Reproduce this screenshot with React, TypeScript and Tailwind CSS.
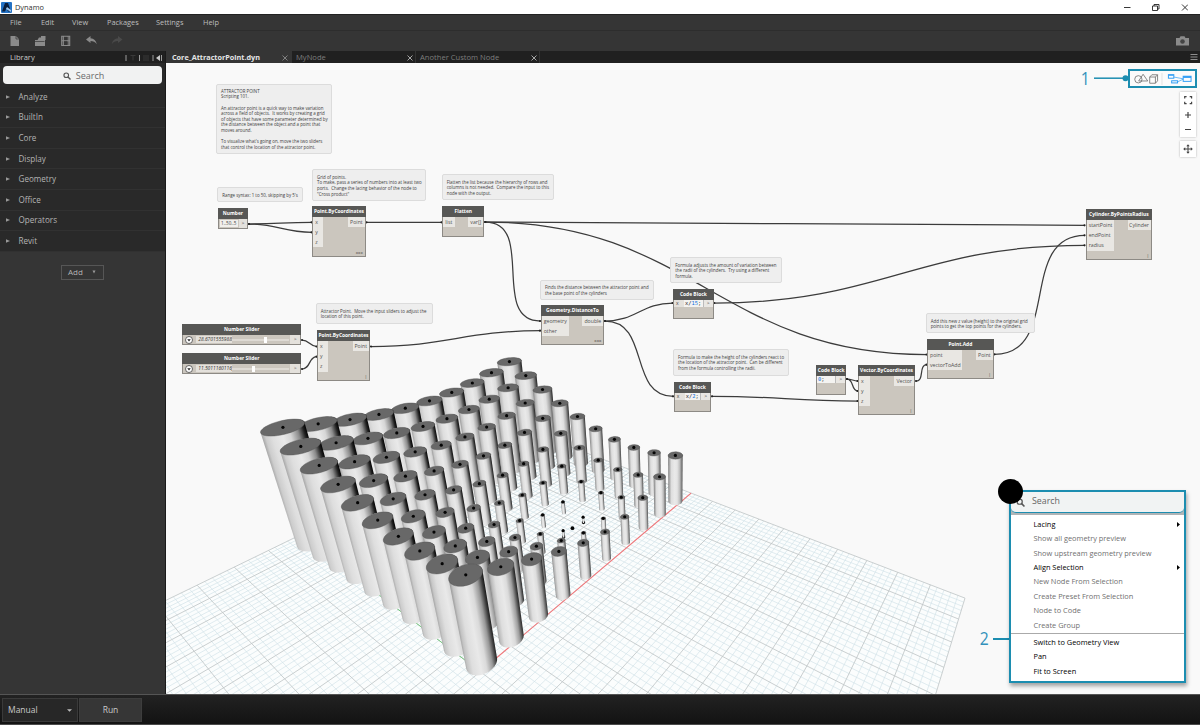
import React from "react";

/* ---------- camera for the background geometry preview ---------- */

const CAM = [1.128267, -0.149705, -0.353239, 0.960449, 0.147092, 0.102962, -0.904811, 1.34325, 0.511136, 0.351331, -0.261642];

type Pt = [number, number];

function depth(X: number, Y: number, Z: number) {
  return (CAM[8] * X + CAM[9] * Y + CAM[10] * Z) / 50 + 1;
}

function project(X: number, Y: number, Z: number): Pt {
  const w = depth(X, Y, Z);
  return [
    (500 * ((CAM[0] * X + CAM[1] * Y + CAM[2] * Z) / 50 + CAM[3])) / w,
    (500 * ((CAM[4] * X + CAM[5] * Y + CAM[6] * Z) / 50 + CAM[7])) / w,
  ];
}

function hull(points: Pt[]): Pt[] {
  const p = [...points].sort((a, b) => a[0] - b[0] || a[1] - b[1]);
  const cross = (o: Pt, a: Pt, b: Pt) => (a[0] - o[0]) * (b[1] - o[1]) - (a[1] - o[1]) * (b[0] - o[0]);
  const half = (list: Pt[]) => {
    const out: Pt[] = [];
    for (const q of list) {
      while (out.length > 1 && cross(out[out.length - 2], out[out.length - 1], q) <= 0) out.pop();
      out.push(q);
    }
    out.pop();
    return out;
  };
  return [...half(p), ...half([...p].reverse())];
}

const fmt = (p: Pt[]) => p.map((q) => q[0].toFixed(2) + "," + q[1].toFixed(2)).join(" ");

function circle(x: number, y: number, z: number, r: number): Pt[] {
  return Array.from({ length: 40 }, (_, k) => {
    const a = (k / 40) * Math.PI * 2;
    return project(x + r * Math.cos(a), y + r * Math.sin(a), z);
  });
}

const ATTRACTOR: Pt = [28.67, 11.5];

const cylinders = Array.from({ length: 100 }, (_, k) => {
  const x = 1 + 5 * (k % 10);
  const y = 1 + 5 * Math.floor(k / 10);
  const d = Math.hypot(x - ATTRACTOR[0], y - ATTRACTOR[1]);
  const topRing = circle(x, y, d / 2, d / 15);
  const baseRing = circle(x, y, 0, d / 15);
  const c0 = project(x, y, 0);
  const c1 = project(x, y, d / 2);
  const len = Math.hypot(c0[0] - c1[0], c0[1] - c1[1]) || 1;
  const nx = (c0[1] - c1[1]) / len;
  const ny = -(c0[0] - c1[0]) / len;
  const off = [...topRing, ...baseRing].map((q) => (q[0] - c1[0]) * nx + (q[1] - c1[1]) * ny);
  const lo = Math.min(...off);
  const hi = Math.max(...off);
  return {
    id: "cyl" + k,
    order: depth(x, y, 0),
    body: fmt(hull([...topRing, ...baseRing])),
    cap: fmt(topRing),
    c0,
    c1,
    small: d < 5,
    grad: [c1[0] + nx * lo, c1[1] + ny * lo, c1[0] + nx * hi, c1[1] + ny * hi],
    side: Math.max(0, Math.min(1, (c1[0] - 400) / 260)),
  };
}).sort((a, b) => b.order - a.order);

const gridLines = Array.from({ length: 101 }, (_, k) => k - 50)
  .flatMap((n) => [
    { n, a: project(n, -50, 0), b: project(n, 50, 0) },
    { n, a: project(-50, n, 0), b: project(50, n, 0) },
  ])
  .sort((p, q) => (p.n % 5 ? 0 : 1) - (q.n % 5 ? 0 : 1));

const mix = (a: number, b: number, t: number) => {
  const v = Math.round(a + (b - a) * t);
  return `rgb(${v},${v},${v})`;
};

function Scene() {
  const o = project(0, 0, 0);
  const ax = project(50, 0, 0);
  const ay = project(0, 50, 0);
  const at = project(ATTRACTOR[0], ATTRACTOR[1], 0);
  return (
    <svg className="absolute top-0 left-0 h-[631px] w-[1034px]" viewBox="166 63 1034 631">
      <defs>
        {cylinders.map((c) => (
          <linearGradient key={c.id} id={c.id} gradientUnits="userSpaceOnUse" x1={c.grad[0]} y1={c.grad[1]} x2={c.grad[2]} y2={c.grad[3]}>
            <stop offset="0" stopColor={mix(165, 115, c.side)} />
            <stop offset="0.08" stopColor={mix(205, 165, c.side)} />
            <stop offset="0.22" stopColor="#dedede" />
            <stop offset="0.45" stopColor="#e9e9e9" />
            <stop offset="0.62" stopColor={mix(214, 228, c.side)} />
            <stop offset="0.8" stopColor={mix(140, 190, c.side)} />
            <stop offset="0.93" stopColor={mix(35, 125, c.side)} />
            <stop offset="1" stopColor={mix(0, 70, c.side)} />
          </linearGradient>
        ))}
      </defs>
      <polygon points={fmt([project(-50, -50, 0), project(50, -50, 0), project(50, 50, 0), project(-50, 50, 0)])} fill="#fbfdfd" />
      {gridLines.map((g, i) => (
        <line key={i} x1={g.a[0]} y1={g.a[1]} x2={g.b[0]} y2={g.b[1]} stroke={g.n % 5 ? "#d0e2e8" : "#c0c6c8"} strokeWidth={g.n % 5 ? 0.65 : 0.85} />
      ))}
      <line x1={o[0]} y1={o[1]} x2={ay[0]} y2={ay[1]} stroke="#6cc774" strokeWidth="0.9" />
      <line x1={o[0]} y1={o[1]} x2={ax[0]} y2={ax[1]} stroke="#f4777b" strokeWidth="1.1" />
      {cylinders.map((c) => (
        <g key={c.id}>
          {c.small && <circle cx={c.c0[0]} cy={c.c0[1]} r="1.6" fill="#111" />}
          <polygon points={c.body} fill={`url(#${c.id})`} />
          <polygon points={c.cap} fill="#686868" stroke="#505050" strokeWidth="0.4" />
          <circle cx={c.c1[0]} cy={c.c1[1]} r="1.6" fill="#050505" />
        </g>
      ))}
      <circle cx={at[0]} cy={at[1]} r="1.9" fill="#050505" />
    </svg>
  );
}

/* ---------- wires ---------- */

const wires: number[][] = [
  [249, 224, 312, 222.3],
  [249, 224, 312, 232.3],
  [366.5, 222.3, 442, 222.3],
  [485.3, 222, 1085, 225.3],
  [485.3, 222, 927, 354.5],
  [485.3, 222, 540.5, 321],
  [605, 321, 673, 303],
  [605, 321, 673.5, 396.3],
  [371, 346.5, 540.5, 330.7],
  [302, 340, 317, 346.5],
  [302, 369, 317, 356.7],
  [714.3, 303, 1085, 245.3],
  [712, 396.3, 858, 401],
  [847, 379, 858, 381],
  [847, 379, 858, 391],
  [916, 381, 927, 364.7],
  [994.5, 354.3, 1085, 235.3],
];

function Wires() {
  return (
    <svg className="absolute top-0 left-0 h-[631px] w-[1034px]" viewBox="166 63 1034 631" fill="none" stroke="#3c3c3c" strokeWidth="1.25">
      {wires.map(([x0, y0, x1, y1], i) => {
        const c = Math.hypot(x1 - x0, y1 - y0) * 0.45;
        return (
          <g key={i}>
            <path d={`M${x0} ${y0}C${x0 + c} ${y0} ${x1 - c} ${y1} ${x1} ${y1}`} />
            <circle cx={x0} cy={y0} r="1.1" fill="#222" stroke="none" />
            <circle cx={x1 - 0.5} cy={y1} r="1.1" fill="#222" stroke="none" />
          </g>
        );
      })}
    </svg>
  );
}

/* ---------- notes ---------- */

const notes = [
  { x: 216, y: 83.7, w: 116.3, h: 70.6, p: 4.6, t: "ATTRACTOR POINT\nScripting 101.\n\nAn attractor point is a quick way to make variation\nacross a field of objects.  It works by creating a grid\nof objects that have some parameter determined by\nthe distance between the object and a point that\nmoves around.\n\nTo visualize what's going on, move the two sliders\nthat control the location of the attractor point." },
  { x: 217.3, y: 187.3, w: 86, h: 14.7, p: 5, t: "Range syntax: 1 to 50, skipping by 5's" },
  { x: 312, y: 169.3, w: 113.7, h: 31.3, p: 5, t: "Grid of points.\nTo make, pass a series of numbers into at least two\nports.  Change the lacing behavior of the node to\n\"Cross product\"" },
  { x: 441.7, y: 174.3, w: 112.3, h: 26, p: 5, t: "Flatten the list because the hierarchy of rows and\ncolumns is not needed.  Compare the input to this\nnode with the output." },
  { x: 315.7, y: 303, w: 117.3, h: 20.7, p: 5.2, t: "Attractor Point.  Move the input sliders to adjust the\nlocation of this point." },
  { x: 540, y: 280, w: 113.6, h: 20, p: 4.8, t: "Finds the distance between the attractor point and\nthe base point of the cylinders" },
  { x: 670.3, y: 257.3, w: 111.6, h: 26, p: 5, t: "Formula adjusts the amount of variation between\nthe radii of the cylinders.  Try using a different\nformula." },
  { x: 673, y: 349.3, w: 116.3, h: 26.3, p: 5, t: "Formula to make the height of the cylinders react to\nthe location of the attractor point.  Can be different\nfrom the formula controlling the radii." },
  { x: 925.7, y: 313.3, w: 109.6, h: 20, p: 4.8, t: "Add this new z value (height) to the original grid\npoints to get the top points for the cylinders." },
];

/* ---------- nodes ---------- */

type NodeData = { x: number; y: number; w: number; h: number; title: string; ins: string[]; inW: number; out: string; outW: number; foot: string };

const nodes: NodeData[] = [
  { x: 312.3, y: 206, w: 53.4, h: 50.7, title: "Point.ByCoordinates", ins: ["x", "y", "z"], inW: 10, out: "Point", outW: 16.5, foot: "xxx" },
  { x: 442.3, y: 206, w: 42, h: 30.7, title: "Flatten", ins: ["list"], inW: 11.3, out: "var[]", outW: 15.5, foot: "" },
  { x: 317, y: 330.3, w: 53, h: 50.4, title: "Point.ByCoordinates", ins: ["x", "y", "z"], inW: 10, out: "Point", outW: 16.5, foot: "|" },
  { x: 540.7, y: 305, w: 63.6, h: 40, title: "Geometry.DistanceTo", ins: ["geometry", "other"], inW: 27.3, out: "double", outW: 21, foot: "xxx" },
  { x: 858, y: 365, w: 57, h: 49.7, title: "Vector.ByCoordinates", ins: ["x", "y", "z"], inW: 10.5, out: "Vector", outW: 19.7, foot: "|" },
  { x: 927, y: 338.7, w: 66.7, h: 40, title: "Point.Add", ins: ["point", "vectorToAdd"], inW: 34, out: "Point", outW: 16.5, foot: "|" },
  { x: 1085.7, y: 209.3, w: 66.3, h: 50.4, title: "Cylinder.ByPointsRadius", ins: ["startPoint", "endPoint", "radius"], inW: 27.3, out: "Cylinder", outW: 23, foot: "|" },
];

function place(n: { x: number; y: number; w: number; h: number }): React.CSSProperties {
  return { left: n.x - 166, top: n.y - 63, width: n.w, height: n.h };
}

const frame = "absolute flex flex-col border-[0.7px] border-[#8d8a85] bg-[#cbc6be]";

function Title({ children }: { children: React.ReactNode }) {
  return <div className="-mx-px -mt-px flex h-[11px] shrink-0 items-center justify-center overflow-hidden bg-[#575755] text-[4.9px] font-bold whitespace-nowrap text-white">{children}</div>;
}

function GraphNode({ n }: { n: NodeData }) {
  return (
    <div className={frame} style={place(n)}>
      <Title>{n.title}</Title>
      <div className="flex items-start justify-between text-[5.2px] leading-[10px] text-[#505050]">
        <div className="bg-[#e9e7e3]" style={{ width: n.inW }}>
          {n.ins.map((p) => (
            <div key={p} className="h-[10.1px] pl-[2px] whitespace-nowrap">{p}</div>
          ))}
        </div>
        <div className="h-[10px] bg-[#e9e7e3] pr-[2px] text-right whitespace-nowrap" style={{ width: n.outW }}>{n.out}</div>
      </div>
      <div className="mt-auto pr-[2px] text-right text-[4px] leading-[7px] font-bold text-[#77736d]">{n.foot}</div>
    </div>
  );
}

function Slider({ y, value, knob }: { y: number; value: string; knob: number }) {
  return (
    <div className={frame} style={place({ x: 182.3, y, w: 119, h: 20.5 })}>
      <Title>Number Slider</Title>
      <div className="flex h-[9px] items-center">
        <svg className="ml-[2px] size-[8px] shrink-0" viewBox="0 0 16 16">
          <circle cx="8" cy="8" r="7" fill="#fff" stroke="#444" strokeWidth="1.6" />
          <path d="M4.5 6.5h7L8 11z" fill="#222" />
        </svg>
        <div className="ml-[3px] h-[7px] w-[36px] shrink-0 overflow-hidden bg-[#e4e1dc] px-[2px] text-[4.9px] leading-[7px] whitespace-nowrap text-[#333] italic">{value}</div>
        <div className="flex h-[2px] w-[57px] shrink-0 items-center border-[0.5px] border-[#dedad4] bg-[#d8d4cd]">
          <div className="h-[6px] w-[3px] shrink-0 bg-white" style={{ marginLeft: knob }} />
        </div>
        <div className="ml-auto h-[9px] w-[10px] bg-[#e4e1dc] text-center text-[5px] leading-[9px] text-[#555]">&gt;</div>
      </div>
    </div>
  );
}

function CodeBlock({ x, y, w, h, pre, num, post, input }: { x: number; y: number; w: number; h: number; pre: string; num: string; post: string; input: boolean }) {
  return (
    <div className={frame} style={place({ x, y, w, h })}>
      <Title>Code Block</Title>
      <div className="flex h-[7px] text-[5px] leading-[7px] text-[#444]">
        {input && <div className="w-[10px] bg-[#e4e1dc] pl-[2px]">x</div>}
        <div className="grow bg-[#f4f3f1] pl-px font-['DejaVu_Sans_Mono',monospace] text-[5.4px] text-[#222]">
          {pre}
          <span className="text-[#0a6fe0]">{num}</span>
          {post}
        </div>
        <div className="w-[10px] border-l-[0.5px] border-[#bbb] bg-[#e9e7e3] text-center">&gt;</div>
      </div>
    </div>
  );
}

/* ---------- chrome ---------- */

const menu = [
  ["File", "ml-[10px] w-[31px]"],
  ["Edit", "w-[31px]"],
  ["View", "w-[35px]"],
  ["Packages", "w-[49px]"],
  ["Settings", "w-[47px]"],
  ["Help", ""],
];

const library = ["Analyze", "BuiltIn", "Core", "Display", "Geometry", "Office", "Operators", "Revit"];

function Magnifier({ className }: { className: string }) {
  return (
    <svg className={className} viewBox="0 0 16 16" fill="none" stroke="#555" strokeWidth="2.2">
      <circle cx="6.5" cy="6.5" r="4.6" />
      <path d="M10 10l5 5" strokeWidth="2.8" />
    </svg>
  );
}

function Sidebar() {
  return (
    <aside className="flex w-[166px] shrink-0 flex-col border-r border-[#1a1a1a] bg-[#353535]">
      <div className="flex h-[12px] items-center bg-[#202020] pt-px pl-[10px] text-[7.6px] text-[#c8c8c8]">
        Library
        <svg className="mr-[2px] ml-auto h-[8px] w-[38px]" viewBox="0 0 38 8" fill="none" stroke="#aaa" strokeWidth="0.9">
          <path d="M1 1v6M14.5 1v6M28 1v6M36.5 1v6" />
          <path d="M5.500 1.500h5M8 1.500v5M18 2h6M18 4h6M18 6h6" stroke="#3c3c3c" />
          <path d="M35 1v6l-4-3z" fill="#ccc" stroke="none" />
        </svg>
      </div>
      <div className="h-[24px] bg-[#2a2a2a] px-[3px] pt-[3px]">
        <div className="flex h-[18px] w-[159px] items-center justify-center rounded-[4px] bg-[#f1f2f2] pt-px pl-[2px] text-[9px] text-[#6b6b6b]">
          <Magnifier className="mr-[5px] size-[8px]" />
          Search
        </div>
      </div>
      {library.map((l) => (
        <div key={l} className="flex h-[20.6px] items-center border-b border-[#313131] bg-[#292929] pl-[6px] text-[8.1px] text-[#b4b4b4]">
          <svg className="mr-[8.5px] size-[4px]" viewBox="0 0 4 4"><path d="M0 .3L4 2 0 3.700z" fill="#999" /></svg>
          {l}
        </div>
      ))}
      <div className="mt-[13px] ml-[61px] flex h-[15px] w-[43px] items-center border border-[#565656] pl-[6px] text-[8px] text-[#b4b4b4]">
        Add
        <svg className="ml-[9px] size-[4px]" viewBox="0 0 4 4"><path d="M.5.5h3L2 3.500z" fill="#999" /></svg>
      </div>
    </aside>
  );
}

function Tab({ label, active, className }: { label: string; active?: boolean; className: string }) {
  return (
    <div className={(active ? "bg-[#353535] pl-[6px] text-[7.25px] font-bold text-[#e6e6e6] " : "border-r border-[#333] pl-[4px] text-[7.6px] text-[#7d7d7d] ") + "flex items-center justify-between pt-px " + className}>
      {label}
      <svg className="size-[6px]" viewBox="0 0 6 6" stroke={active ? "#8a8a8a" : "#b5b5b5"} strokeWidth="0.9"><path d="M.5.5l5 5M5.500.5l-5 5" /></svg>
    </div>
  );
}

const contextItems: [string, boolean, boolean][] = [
  ["Lacing", true, true],
  ["Show all geometry preview", false, false],
  ["Show upstream geometry preview", false, false],
  ["Align Selection", true, true],
  ["New Node From Selection", false, false],
  ["Create Preset From Selection", false, false],
  ["Node to Code", false, false],
  ["Create Group", false, false],
];

function ContextMenu() {
  return (
    <div className="absolute top-[427px] left-[843px] flex h-[193px] w-[177px] flex-col border-2 border-[#1c8db0] bg-white text-[7.4px] shadow-[1px_3px_4px_rgba(0,0,0,0.35)]">
      <div className="bg-[#b0b4b6] pb-[2px]">
        <div className="flex h-[21px] items-center rounded-b-[5px] border-b-[1.5px] border-[#1c8db0] bg-[#f1f3f3] pl-[5px] text-[8.8px] text-[#666]">
          <Magnifier className="mr-[7px] size-[9px]" />
          Search
        </div>
      </div>
      <div className="mt-[2.5px] flex flex-col">
        {contextItems.map(([t, on, sub]) => (
          <div key={t} className={"flex h-[14.35px] items-center justify-between pr-[4px] pl-[22.5px] " + (on ? "text-black" : "text-[#6f6f6f]")}>
            {t}
            {sub && <svg className="h-[5px] w-[3px]" viewBox="0 0 3 5"><path d="M0 0l3 2.500L0 5z" fill="#000" /></svg>}
          </div>
        ))}
      </div>
      <div className="mt-px border-t border-[#aaa] pt-px">
        {["Switch to Geometry View", "Pan", "Fit to Screen"].map((t) => (
          <div key={t} className="flex h-[14.35px] items-center pl-[22.5px] text-black">{t}</div>
        ))}
      </div>
    </div>
  );
}

function Canvas() {
  return (
    <main className="relative grow overflow-hidden bg-[#f9f9f9]">
      <Scene />
      <Wires />
      {notes.map((n) => (
        <div key={n.t} className="absolute rounded-[2px] border-[0.7px] border-[#dcdcdc] bg-[#eeeeee] pl-[4px] text-[4.4px] leading-[5.6px] whitespace-pre text-[#3c3c3c]" style={{ ...place(n), paddingTop: n.p - 0.4 }}>{n.t}</div>
      ))}
      <div className={frame} style={place({ x: 217.7, y: 208, w: 30.5, h: 20.7 })}>
        <Title>Number</Title>
        <div className="flex h-[9px] text-[5px] leading-[8px] text-[#444]">
          <div className="m-px w-[18px] shrink-0 bg-[#f1efec] text-center text-[4.6px] leading-[7px]">1..50..5</div>
          <div className="grow bg-[#e4e1dc] text-center">&gt;</div>
        </div>
      </div>
      <Slider y={324.3} value="28.6701555988!" knob={31} />
      <Slider y={353} value="11.5011160116₂" knob={18.5} />
      {nodes.map((n, i) => <GraphNode key={i} n={n} />)}
      <CodeBlock x={673} y={288.7} w={40.7} h={30.3} pre="x/" num="15" post=";" input />
      <CodeBlock x={673.7} y={382.3} w={37.6} h={29.7} pre="x/" num="2" post=";" input />
      <CodeBlock x={816} y={365} w={30.3} h={29.7} pre="" num="0" post=";" input={false} />

      {/* view switch with its callout */}
      <svg className="absolute top-[10px] left-[924px] h-[10px] w-[42px]" viewBox="0 0 42 10"><path d="M4 5.200h32" stroke="#1c8db0" strokeWidth="1.5" /><circle cx="35.500" cy="5.200" r="3" fill="#1c8db0" /></svg>
      <div className="absolute top-[4px] left-[914px] origin-center scale-x-[0.85] text-[18.5px] leading-[22px] text-[#3391bb]">1</div>
      <div className="absolute top-[6px] left-[962px] flex h-[19px] w-[69px] items-center border-2 border-[#1c8db0] bg-[#fbfbfb]">
        <svg className="h-[12px] w-[65px] shrink-0" viewBox="0 0 66 12" fill="none" stroke="#6a6a6a" strokeWidth="0.8">
          <circle cx="8.500" cy="6.300" r="3.700" />
          <path d="M13.300 1.200l4.700 6.800h-9.200z" />
          <path d="M20 4h5.800v6.300H20zM20 4l2.200-2.300H28v6.200l-2.200 2.400M25.800 4L28 1.700" />
          <path d="M32.500 0v12" stroke="#ddd" />
          <g stroke="#2f9df5" strokeWidth="1">
            <rect x="39" y="1.600" width="5.500" height="3.600" /><path d="M39 2.200h5.500" />
            <rect x="42.300" y="7.800" width="6" height="2.200" />
            <rect x="54" y="3.200" width="8" height="5.200" /><path d="M54 4h8" strokeWidth="1.800" />
            <path d="M44.500 4l9.500 1.800M48.500 8.800l5.500-2.600" strokeWidth="0.7" />
          </g>
        </svg>
      </div>
      <div className="absolute top-[29px] left-[1014px] flex w-[16px] flex-col items-center bg-white shadow-[0_0_2px_rgba(0,0,0,0.3)]">
        <svg className="h-[45px] w-[16px]" viewBox="0 0 16 45" fill="none" stroke="#444" strokeWidth="1.200">
          <path d="M4.700 6.600V4.700h1.900M9.700 4.700h1.900v1.900M11.600 9.700v1.900H9.700M6.600 11.600H4.700V9.700" />
          <path d="M5 23h6M8 20v6M5 37.500h6" />
        </svg>
      </div>
      <div className="absolute top-[78px] left-[1014px] h-[16px] w-[16px] bg-white shadow-[0_0_2px_rgba(0,0,0,0.3)]">
        <svg className="size-[16px]" viewBox="0 0 16 16" fill="#444" stroke="#444">
          <path d="M8 4.500v7M4.500 8h7" />
          <path d="M8 3.200l1.700 2H6.300zM8 12.800l1.700-2H6.300zM3.200 8l2-1.700v3.400zM12.800 8l-2-1.700v3.400z" stroke="none" />
        </svg>
      </div>

      <div className="absolute top-[575px] left-[827px] h-[1.5px] w-[17px] bg-[#1c8db0]" />
      <div className="absolute top-[564px] left-[812.5px] origin-center scale-x-[0.85] text-[18.5px] leading-[22px] text-[#3391bb]">2</div>
      <ContextMenu />
      <div className="absolute top-[415.5px] left-[831.5px] size-[25px] rounded-full bg-black" />
    </main>
  );
}

export default function App() {
  return (
    <div className="flex h-[725px] w-[1200px] flex-col overflow-hidden bg-[#353535] font-['Open_Sans',sans-serif]">
      <header className="flex h-[15px] shrink-0 items-center border-b border-[#222] bg-white text-[7.4px] text-[#333]">
        <svg className="ml-px size-[11px]" viewBox="0 0 11 11">
          <rect width="11" height="11" rx="1" fill="#2472c4" />
          <path d="M4 1h3l3 8.500H7L5.500 6 4 9.500H1z" fill="#0a1e3c" />
          <path d="M6 5l4 3v2L5 7z" fill="#9fc8f0" />
        </svg>
        <span className="mt-px ml-[3px]">Dynamo</span>
        <svg className="mr-[12px] ml-auto h-[9px] w-[64px]" viewBox="0 0 64 9" fill="none" stroke="#222" strokeWidth="0.9">
          <path d="M0 4.500h6.500M58 1.500l6 6M64 1.500l-6 6" />
          <path d="M28.500 3h5v4.500h-5zM30 3V1.500h5V6h-1.500" />
        </svg>
      </header>
      <nav className="flex h-[16px] shrink-0 items-center border-b border-[#2d2d2d] text-[7.4px] text-[#bdbdbd]">
        {menu.map(([m, c]) => <span key={m} className={c}>{m}</span>)}
      </nav>
      <div className="flex h-[20px] shrink-0 items-center">
        <svg className="h-[20px] w-[130px]" viewBox="0 31 130 20" fill="#8b8b8b">
          <path d="M10.500 36h5.500l3 3v7h-8.500z" /><path d="M16 36v3h3" fill="none" stroke="#353535" strokeWidth="0.7" />
          <path d="M35 40h10v6H35zM37.500 40l1.500-2.500h2V36h4.500v4z" /><path d="M34.500 41.500h10" stroke="#353535" strokeWidth="0.7" />
          <path d="M61.700 36.200h8v9.300h-8zM61.700 40.800h8M63.300 36v9.500M68.100 36v9.500" fill="none" stroke="#8b8b8b" strokeWidth="1.100" />
          <path d="M64 37h3.500v3H64zM64 41.500h3.500v3.300H64z" fill="#353535" />
          <path d="M86 39.500l4.500-3.500v2.200c3.500.2 5.500 2.300 6.300 6-1.500-2.200-3.500-3.200-6.300-3.200v2z" />
          <path d="M122.500 39.500l-4.500-3.500v2.200c-3.500.2-5.500 2.300-6.300 6 1.500-2.200 3.500-3.200 6.300-3.200v2z" fill="#4a4a4a" />
        </svg>
        <svg className="mr-[11px] ml-auto h-[10px] w-[13px]" viewBox="0 0 13 10">
          <path d="M0 2h3.500l1-1.700h4l1 1.700H13v7.500H0z" fill="#8b8b8b" /><circle cx="6.500" cy="5.500" r="2.300" fill="#444" />
        </svg>
      </div>
      <div className="flex h-[643px] shrink-0">
        <Sidebar />
        <section className="flex grow flex-col">
          <div className="flex h-[12px] shrink-0 bg-[#202020]">
            <Tab active label="Core_AttractorPoint.dyn" className="w-[126px] pr-[4px]" />
            <Tab label="MyNode" className="w-[124px] pr-[2px]" />
            <Tab label="Another Custom Node" className="w-[124px] pr-[2px]" />
            <svg className="mt-[2px] mr-[2px] ml-auto h-[8px] w-[8px]" viewBox="0 0 8 8" stroke="#8d8d8d"><path d="M.5 1.500h7M.5 4h7M.5 6.500h7" /></svg>
          </div>
          <Canvas />
        </section>
      </div>
      <footer className="flex grow items-center border-t border-b border-t-[#555] border-b-[#4a4a4a] bg-linear-to-b from-[#222] to-[#131313] pl-[2px] text-[8.5px] text-[#c9c9c9]">
        <div className="flex h-[24px] w-[76px] items-center justify-between border border-[#3a3a3a] bg-[#272727] px-[5px] pt-px">
          Manual
          <svg className="h-[3px] w-[5px]" viewBox="0 0 5 3"><path d="M0 .2h5L2.500 2.800z" fill="#bbb" /></svg>
        </div>
        <div className="ml-px flex h-[24px] w-[63px] items-center justify-center border border-[#3d3d3d] bg-[#363636] pt-px">Run</div>
      </footer>
    </div>
  );
}
